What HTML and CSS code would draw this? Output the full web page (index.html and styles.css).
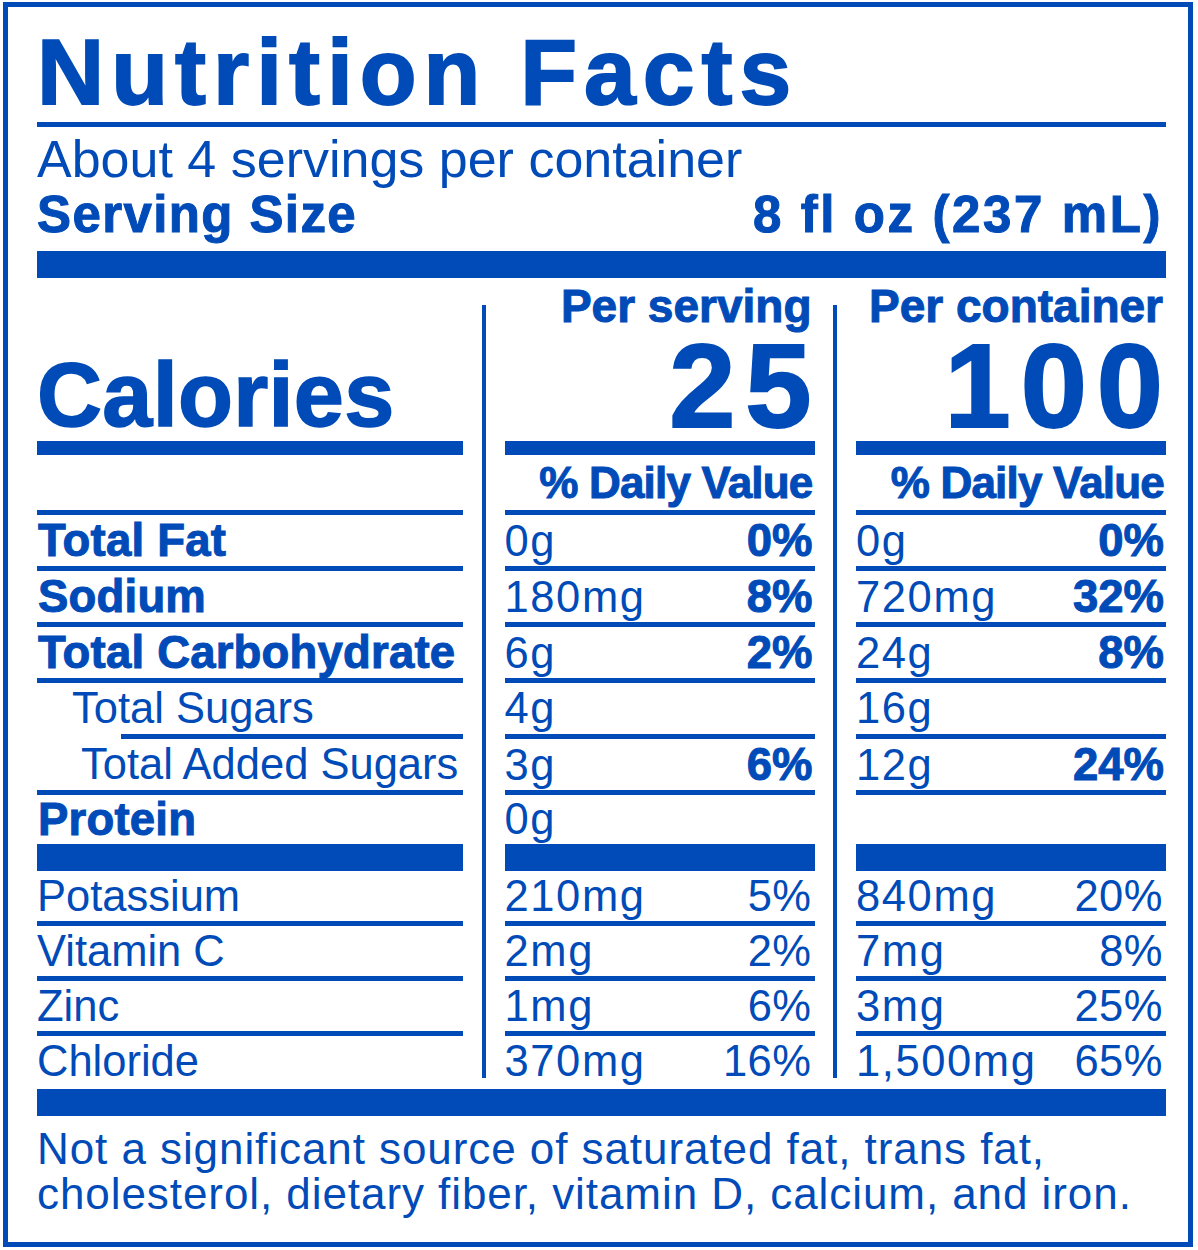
FILE: index.html
```html
<!DOCTYPE html>
<html lang="en">
<head>
<meta charset="utf-8">
<title>Nutrition Facts</title>
<link rel="stylesheet" href="styles.css">
</head>
<body>
<div class="label">
  <h1 class="title">Nutrition Facts</h1>
  <div class="rule-thin"></div>
  <p class="servings">About 4 servings per container</p>
  <div class="serving-size"><span class="ss-label">Serving Size</span><span class="ss-amount">8 fl oz (237 mL)</span></div>
  <div class="bar"></div>

  <div class="facts">
    <div class="divider d1"></div>
    <div class="divider d2"></div>

    <div class="cell head-left"><span class="calories">Calories</span></div>
    <div class="cell head"><div class="per">Per serving</div><div class="cal-num">25</div></div>
    <div class="cell head"><div class="per">Per container</div><div class="cal-num">100</div></div>

    <div class="cell dv"></div>
    <div class="cell dv"><span>% Daily Value</span></div>
    <div class="cell dv"><span>% Daily Value</span></div>

    <div class="cell row"><span class="nb">Total Fat</span></div>
    <div class="cell row"><span class="v">0g</span><span class="pb">0%</span></div>
    <div class="cell row"><span class="v">0g</span><span class="pb">0%</span></div>

    <div class="cell row"><span class="nb">Sodium</span></div>
    <div class="cell row"><span class="v">180mg</span><span class="pb">8%</span></div>
    <div class="cell row"><span class="v">720mg</span><span class="pb">32%</span></div>

    <div class="cell row"><span class="nb">Total Carbohydrate</span></div>
    <div class="cell row"><span class="v">6g</span><span class="pb">2%</span></div>
    <div class="cell row"><span class="v">24g</span><span class="pb">8%</span></div>

    <div class="cell sub sub-1"><span class="sub-text">Total Sugars</span><div class="part-rule"></div></div>
    <div class="cell row"><span class="v">4g</span></div>
    <div class="cell row"><span class="v">16g</span></div>

    <div class="cell row sub-2"><span>Total Added Sugars</span></div>
    <div class="cell row"><span class="v">3g</span><span class="pb">6%</span></div>
    <div class="cell row"><span class="v">12g</span><span class="pb">24%</span></div>

    <div class="cell row protein"><span class="nb">Protein</span></div>
    <div class="cell row protein"><span class="v">0g</span></div>
    <div class="cell row protein"></div>

    <div class="cell row lo"><span>Potassium</span></div>
    <div class="cell row lo"><span class="v">210mg</span><span class="p">5%</span></div>
    <div class="cell row lo"><span class="v">840mg</span><span class="p">20%</span></div>

    <div class="cell row lo"><span>Vitamin C</span></div>
    <div class="cell row lo"><span class="v">2mg</span><span class="p">2%</span></div>
    <div class="cell row lo"><span class="v">7mg</span><span class="p">8%</span></div>

    <div class="cell row lo"><span>Zinc</span></div>
    <div class="cell row lo"><span class="v">1mg</span><span class="p">6%</span></div>
    <div class="cell row lo"><span class="v">3mg</span><span class="p">25%</span></div>

    <div class="cell row lo last"><span>Chloride</span></div>
    <div class="cell row lo last"><span class="v">370mg</span><span class="p">16%</span></div>
    <div class="cell row lo last"><span class="v">1,500mg</span><span class="p">65%</span></div>
  </div>

  <div class="bar bar-bottom"></div>
  <p class="note">Not a significant source of saturated fat, trans fat,<br>cholesterol, dietary fiber, vitamin D, calcium, and iron.</p>
</div>
</body>
</html>
```

FILE: styles.css
```css
body {
  margin: 0;
  background: #ffffff;
  font-family: "Liberation Sans", Arial, sans-serif;
  color: #004bb8;
}

.label {
  box-sizing: border-box;
  width: 1190px;
  height: 1245px;
  margin: 2px 0 0 3px;
  border: 5px solid #004bb8;
  padding: 17px 22px 0 29px;
}

.title {
  margin: 0;
  font-size: 93px;
  line-height: 96px;
  font-weight: 700;
  letter-spacing: 7px;
  -webkit-text-stroke: 1.8px #004bb8;
}

.rule-thin {
  height: 5px;
  margin-top: 2px;
  background: #004bb8;
}

.servings {
  margin: 4px 0 0;
  font-size: 52px;
  line-height: 56px;
}

.serving-size {
  display: flex;
  justify-content: space-between;
  font-size: 51px;
  line-height: 56px;
  font-weight: 700;
  -webkit-text-stroke: 1px #004bb8;
}

.ss-label {
  letter-spacing: 1.4px;
}

.ss-amount {
  letter-spacing: 2.6px;
  margin-right: 3px;
}

.bar {
  height: 27px;
  margin-top: 8px;
  background: #004bb8;
}

.facts {
  display: grid;
  grid-template-columns: 426px 4px 310px 4px 310px;
  column-gap: 18.75px;
}

.divider {
  grid-row: 1 / span 12;
  margin: 27px 0 8px;
  background: #004bb8;
}

.d1 { grid-column: 2; }
.d2 { grid-column: 4; }

.cell {
  border-bottom: 5px solid #004bb8;
}

.head-left {
  display: flex;
  align-items: flex-end;
  border-bottom-width: 14px;
}

.calories {
  font-size: 90px;
  line-height: 92px;
  font-weight: 700;
  letter-spacing: 0.3px;
  -webkit-text-stroke: 1.5px #004bb8;
}

.head {
  padding-top: 3px;
  text-align: right;
  border-bottom-width: 14px;
  font-weight: 700;
}

.per {
  font-size: 46px;
  line-height: 50px;
  margin-right: 3px;
  -webkit-text-stroke: 1px #004bb8;
}

.cal-num {
  font-size: 119px;
  line-height: 110px;
  letter-spacing: 10px;
  margin-right: -7px;
  -webkit-text-stroke: 2px #004bb8;
}

.dv {
  height: 55px;
  line-height: 55px;
  text-align: right;
  font-size: 44px;
  font-weight: 700;
  letter-spacing: -0.8px;
  -webkit-text-stroke: 1px #004bb8;
}

.dv span {
  margin-right: 2px;
}

.row {
  display: flex;
  justify-content: space-between;
  align-items: baseline;
  height: 51px;
  line-height: 51px;
  font-size: 43.5px;
}

.v {
  letter-spacing: 1.6px;
}

.nb {
  font-size: 45.5px;
  font-weight: 700;
  margin-left: 1px;
  letter-spacing: 0.2px;
  -webkit-text-stroke: 1px #004bb8;
}

.pb {
  font-size: 45.5px;
  font-weight: 700;
  margin-right: 2px;
  -webkit-text-stroke: 1px #004bb8;
}

.p {
  margin-right: 3px;
  letter-spacing: 0.5px;
}

.sub {
  border-bottom: none;
  display: flex;
  flex-direction: column;
  padding-left: 35px;
}

.sub-text {
  height: 51px;
  line-height: 51px;
  font-size: 43.5px;
}

.part-rule {
  height: 5px;
  margin-left: 48.5px;
  background: #004bb8;
}

.sub-2 {
  padding-left: 44px;
}

.protein {
  height: 49px;
  line-height: 49px;
  border-bottom-width: 27px;
}

.lo {
  height: 50px;
  line-height: 50px;
}

.last {
  border-bottom: none;
}

.bar-bottom {
  margin-top: 3px;
}

.note {
  margin: 10px 0 0;
  font-size: 44px;
  line-height: 45px;
  letter-spacing: 0.93px;
}
```
